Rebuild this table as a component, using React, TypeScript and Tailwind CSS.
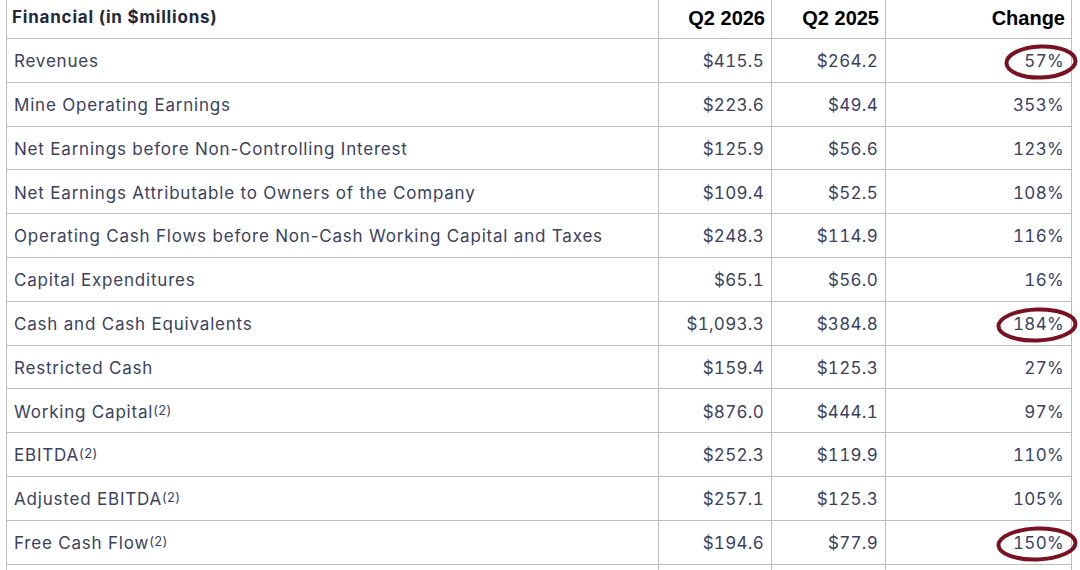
import React from 'react';

// ----------------------------- Data ------------------------------------
interface Row {
  label: string;
  sup?: string;
  q2026: string;
  q2025: string;
  change: string;
  ring?: 'narrow' | 'wide';
}

const rows: Row[] = [
  { label: 'Revenues', q2026: '$415.5', q2025: '$264.2', change: '57%', ring: 'narrow' },
  { label: 'Mine Operating Earnings', q2026: '$223.6', q2025: '$49.4', change: '353%' },
  { label: 'Net Earnings before Non-Controlling Interest', q2026: '$125.9', q2025: '$56.6', change: '123%' },
  { label: 'Net Earnings Attributable to Owners of the Company', q2026: '$109.4', q2025: '$52.5', change: '108%' },
  { label: 'Operating Cash Flows before Non-Cash Working Capital and Taxes', q2026: '$248.3', q2025: '$114.9', change: '116%' },
  { label: 'Capital Expenditures', q2026: '$65.1', q2025: '$56.0', change: '16%' },
  { label: 'Cash and Cash Equivalents', q2026: '$1,093.3', q2025: '$384.8', change: '184%', ring: 'wide' },
  { label: 'Restricted Cash', q2026: '$159.4', q2025: '$125.3', change: '27%' },
  { label: 'Working Capital', sup: '(2)', q2026: '$876.0', q2025: '$444.1', change: '97%' },
  { label: 'EBITDA', sup: '(2)', q2026: '$252.3', q2025: '$119.9', change: '110%' },
  { label: 'Adjusted EBITDA', sup: '(2)', q2026: '$257.1', q2025: '$125.3', change: '105%' },
  { label: 'Free Cash Flow', sup: '(2)', q2026: '$194.6', q2025: '$77.9', change: '150%', ring: 'wide' },
];

// red marker ring drawn around a value
const Ring = ({ wide }: { wide: boolean }) => {
  const w = wide ? 84 : 76;
  return (
    <svg
      className="absolute right-[-15px] top-1/2 -translate-y-1/2 pointer-events-none"
      width={w}
      height="38"
      viewBox={`0 0 ${w} 38`}
    >
      <ellipse
        cx={w / 2}
        cy="19"
        rx={w / 2 - 3.5}
        ry="15.5"
        transform={`rotate(-2 ${w / 2} 19)`}
        fill="none"
        stroke="#7a1122"
        strokeWidth="4"
      />
    </svg>
  );
};

const cell = 'border border-[#bdbdbd] h-[43.8px] px-[7px] pt-[3px] align-middle';
const num = `${cell} text-right tabular-nums tracking-[0.3px]`;

export default function App() {
  return (
    <div className="w-[1080px] h-[570px] overflow-hidden bg-white">
      <table
        className="ml-[6px] w-[1065px] table-fixed border-collapse text-[17px] tracking-[0.8px] text-[#3b4160]"
        style={{ fontFamily: 'Inter, "Noto Sans", sans-serif' }}
      >
        <colgroup>
          <col className="w-[652px]" />
          <col className="w-[113px]" />
          <col className="w-[114px]" />
          <col className="w-[186px]" />
        </colgroup>
        <thead>
          <tr className="h-[38.5px]">
            <th className="border-x border-b border-[#bdbdbd] px-[5px] pb-[3px] text-left text-[17px] font-bold tracking-[0.8px] text-[#23283d]">
              Financial (in $millions)
            </th>
            {['Q2 2026', 'Q2 2025', 'Change'].map((h) => (
              <th
                key={h}
                className="border-x border-b border-[#bdbdbd] px-[6px] pb-[3px] text-right text-[20px] font-bold tracking-normal text-black"
                style={{ fontFamily: '"Liberation Sans", Arial, sans-serif' }}
              >
                {h}
              </th>
            ))}
          </tr>
        </thead>
        <tbody>
          {rows.map((r) => (
            <tr key={r.label}>
              <td className={`${cell} text-left px-[5px]`}>
                {r.label}
                {r.sup && <sup className="text-[13px] relative top-[-3px] tracking-[0.3px]">{r.sup}</sup>}
              </td>
              <td className={num}>{r.q2026}</td>
              <td className={num}>{r.q2025}</td>
              <td className={num}>
                <span className="relative inline-block">
                  {r.change}
                  {r.ring && <Ring wide={r.ring === 'wide'} />}
                </span>
              </td>
            </tr>
          ))}
          <tr>
            <td className={cell}></td>
            <td className={cell}></td>
            <td className={cell}></td>
            <td className={cell}></td>
          </tr>
        </tbody>
      </table>
    </div>
  );
}
